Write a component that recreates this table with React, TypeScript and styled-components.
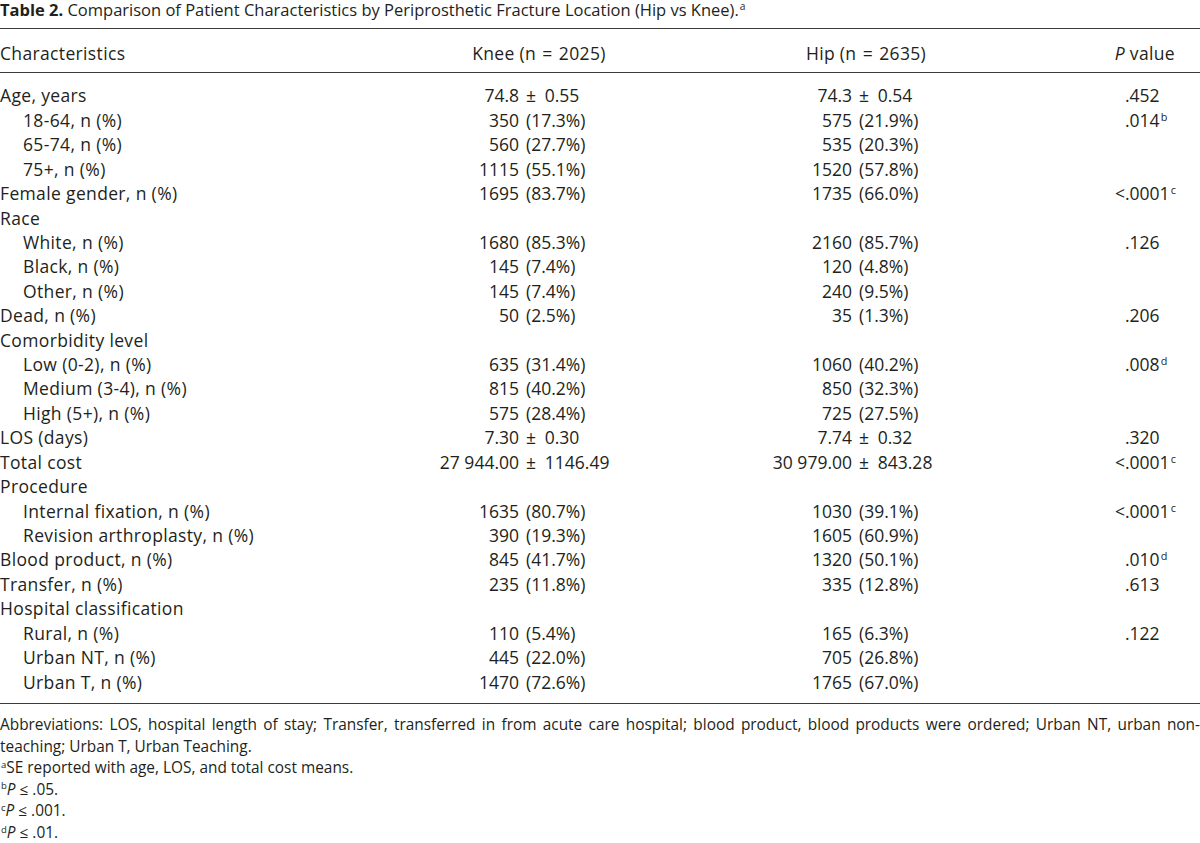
import React from "react";
import styled, { createGlobalStyle } from "styled-components";

const Global = createGlobalStyle`
  html, body { margin: 0; padding: 0; background: #ffffff; }
  body { font-family: "Open Sans", Lato, "Liberation Sans", sans-serif; color: #231f20; }
`;

const Page = styled.main`
  width: 1200px;
  font-family: "Open Sans", Lato, "Liberation Sans", sans-serif;
  color: #231f20;
`;

const Caption = styled.p`
  margin: 0;
  height: 29px;
  font-size: 16.5px;
  line-height: 20px;
  border-bottom: 1px solid #3a3a3a;
  box-sizing: border-box;
`;

const Bold = styled.b`
  font-weight: 700;
`;

const Sup = styled.sup`
  font-size: 0.62em;
  line-height: 0;
  vertical-align: 0.55em;
  margin-left: 1px;
  letter-spacing: 0;
`;

const Table = styled.section`
  display: flex;
  flex-direction: column;
  border-bottom: 1px solid #3a3a3a;
  font-size: 17.5px;
`;

const Head = styled.div`
  display: grid;
  grid-template-columns: 380px 320px 340px 160px;
  line-height: 24.4px;
  padding: 12px 0 7px;
  border-bottom: 1px solid #3a3a3a;
  letter-spacing: 0.35px;
`;

type HeadCellProps = { $align: "left" | "center" | "right"; $shift?: number };

const HeadCell = styled.div<HeadCellProps>`
  text-align: ${(p) => p.$align};
  padding-right: ${(p) => (p.$shift ?? 0)}px;
`;

const Body = styled.div`
  display: flex;
  flex-direction: column;
  padding: 10px 0 9px;
`;

const Row = styled.div`
  display: grid;
  grid-template-columns: 380px 139px 181px 152px 188px 85px 75px;
  line-height: 24.42px;
  white-space: nowrap;
`;

const Label = styled.div<{ $indent?: boolean }>`
  padding-left: ${(p) => (p.$indent ? 23 : 0)}px;
  letter-spacing: 0.35px;
`;

const Pre = styled.div`
  text-align: right;
`;

const Post = styled.div<{ $tight?: boolean }>`
  text-align: left;
  padding-left: ${(p) => (p.$tight ? 0 : 7)}px;
`;

const Italic = styled.i`
  font-style: italic;
`;

const Notes = styled.footer`
  padding-top: 10px;
  font-size: 15.4px;
  line-height: 21.6px;
`;

const Note = styled.p`
  margin: 0;
  text-align: justify;
`;

type Pair = [string, string];
type RowData = {
  label: string;
  indent?: boolean;
  k?: Pair;
  h?: Pair;
  p?: [string, string, string?];
};

const PM = "\u00b1\u2002";
const EQ = "\u2004=\u2004";

const rows: RowData[] = [
  { label: "Age, years", k: ["74.8", PM + "0.55"], h: ["74.3", PM + "0.54"], p: ["", ".452"] },
  { label: "18-64, n (%)", indent: true, k: ["350", "(17.3%)"], h: ["575", "(21.9%)"], p: ["", ".014", "b"] },
  { label: "65-74, n (%)", indent: true, k: ["560", "(27.7%)"], h: ["535", "(20.3%)"] },
  { label: "75+, n (%)", indent: true, k: ["1115", "(55.1%)"], h: ["1520", "(57.8%)"] },
  { label: "Female gender, n (%)", k: ["1695", "(83.7%)"], h: ["1735", "(66.0%)"], p: ["<", ".0001", "c"] },
  { label: "Race" },
  { label: "White, n (%)", indent: true, k: ["1680", "(85.3%)"], h: ["2160", "(85.7%)"], p: ["", ".126"] },
  { label: "Black, n (%)", indent: true, k: ["145", "(7.4%)"], h: ["120", "(4.8%)"] },
  { label: "Other, n (%)", indent: true, k: ["145", "(7.4%)"], h: ["240", "(9.5%)"] },
  { label: "Dead, n (%)", k: ["50", "(2.5%)"], h: ["35", "(1.3%)"], p: ["", ".206"] },
  { label: "Comorbidity level" },
  { label: "Low (0-2), n (%)", indent: true, k: ["635", "(31.4%)"], h: ["1060", "(40.2%)"], p: ["", ".008", "d"] },
  { label: "Medium (3-4), n (%)", indent: true, k: ["815", "(40.2%)"], h: ["850", "(32.3%)"] },
  { label: "High (5+), n (%)", indent: true, k: ["575", "(28.4%)"], h: ["725", "(27.5%)"] },
  { label: "LOS (days)", k: ["7.30", PM + "0.30"], h: ["7.74", PM + "0.32"], p: ["", ".320"] },
  { label: "Total cost", k: ["27 944.00", PM + "1146.49"], h: ["30 979.00", PM + "843.28"], p: ["<", ".0001", "c"] },
  { label: "Procedure" },
  { label: "Internal fixation, n (%)", indent: true, k: ["1635", "(80.7%)"], h: ["1030", "(39.1%)"], p: ["<", ".0001", "c"] },
  { label: "Revision arthroplasty, n (%)", indent: true, k: ["390", "(19.3%)"], h: ["1605", "(60.9%)"] },
  { label: "Blood product, n (%)", k: ["845", "(41.7%)"], h: ["1320", "(50.1%)"], p: ["", ".010", "d"] },
  { label: "Transfer, n (%)", k: ["235", "(11.8%)"], h: ["335", "(12.8%)"], p: ["", ".613"] },
  { label: "Hospital classification" },
  { label: "Rural, n (%)", indent: true, k: ["110", "(5.4%)"], h: ["165", "(6.3%)"], p: ["", ".122"] },
  { label: "Urban NT, n (%)", indent: true, k: ["445", "(22.0%)"], h: ["705", "(26.8%)"] },
  { label: "Urban T, n (%)", indent: true, k: ["1470", "(72.6%)"], h: ["1765", "(67.0%)"] },
];

export default function App() {
  return (
    <Page>
      <Global />
      <Caption>
        <Bold>Table 2.</Bold> Comparison of Patient Characteristics by Periprosthetic Fracture Location (Hip vs
        Knee).<Sup>a</Sup>
      </Caption>
      <Table>
        <Head>
          <HeadCell $align="left">Characteristics</HeadCell>
          <HeadCell $align="center" $shift={2}>{`Knee (n${EQ}2025)`}</HeadCell>
          <HeadCell $align="center" $shift={8}>{`Hip (n${EQ}2635)`}</HeadCell>
          <HeadCell $align="right" $shift={25}>
            <Italic>P</Italic> value
          </HeadCell>
        </Head>
        <Body>
          {rows.map((r) => (
            <Row key={r.label}>
              <Label $indent={r.indent}>{r.label}</Label>
              <Pre>{r.k?.[0]}</Pre>
              <Post>{r.k?.[1]}</Post>
              <Pre>{r.h?.[0]}</Pre>
              <Post>{r.h?.[1]}</Post>
              <Pre>{r.p?.[0]}</Pre>
              <Post $tight>
                {r.p?.[1]}
                {r.p?.[2] ? <Sup>{r.p[2]}</Sup> : null}
              </Post>
            </Row>
          ))}
        </Body>
      </Table>
      <Notes>
        <Note>
          Abbreviations: LOS, hospital length of stay; Transfer, transferred in from acute care hospital; blood
          product, blood products were ordered; Urban NT, urban non-teaching; Urban T, Urban Teaching.
        </Note>
        <Note>
          <Sup>a</Sup>SE reported with age, LOS, and total cost means.
        </Note>
        <Note>
          <Sup>b</Sup>
          <Italic>P</Italic> ≤ .05.
        </Note>
        <Note>
          <Sup>c</Sup>
          <Italic>P</Italic> ≤ .001.
        </Note>
        <Note>
          <Sup>d</Sup>
          <Italic>P</Italic> ≤ .01.
        </Note>
      </Notes>
    </Page>
  );
}
